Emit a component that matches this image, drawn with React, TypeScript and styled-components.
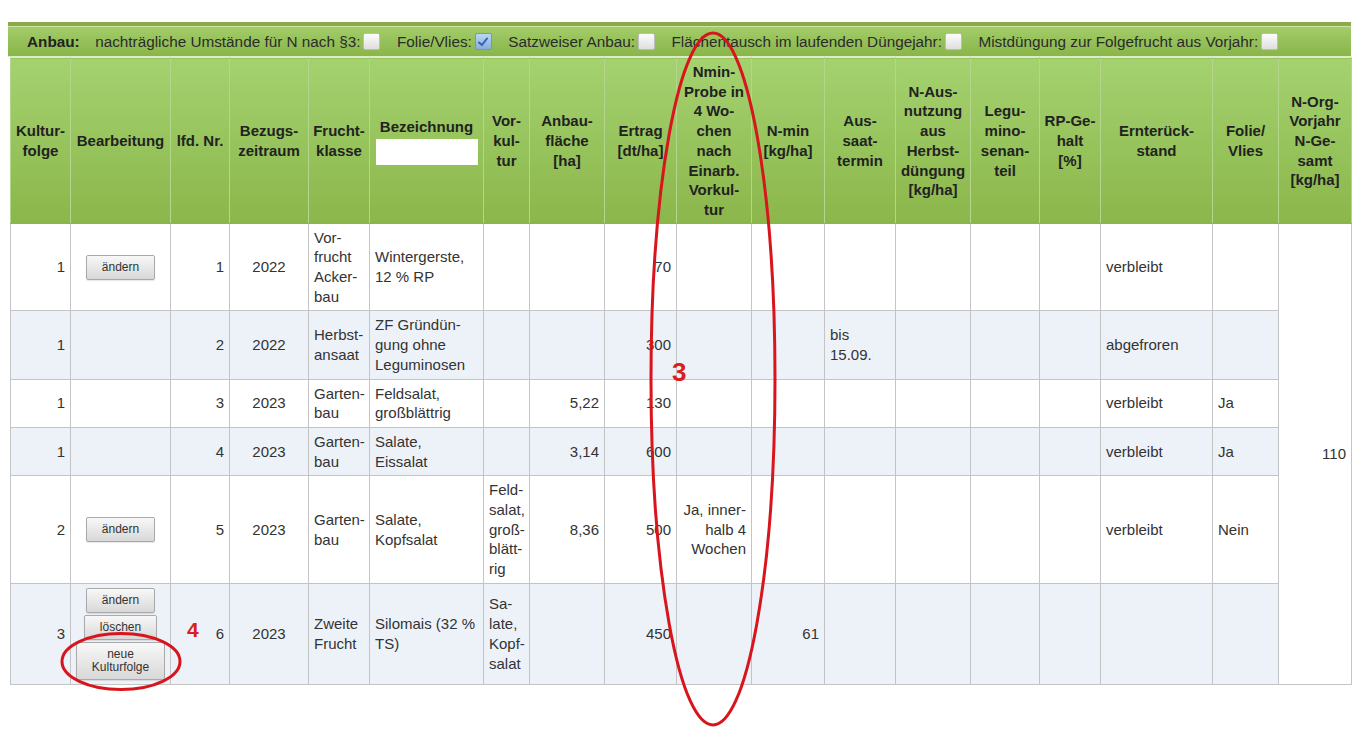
import React from "react";
import styled, { createGlobalStyle } from "styled-components";

type Align = "left" | "right" | "center";

const GlobalStyle = createGlobalStyle`
  html, body { margin: 0; padding: 0; background: #ffffff; }
  body { font-family: "Liberation Sans", Arial, sans-serif; color: #333; }
`;

const Page = styled.div`
  position: relative;
  width: 1358px;
  height: 745px;
  padding: 22px 0 0 8px;
  box-sizing: border-box;
  overflow: hidden;
`;

const OptionsBar = styled.div`
  width: 1343px;
  height: 35px;
  box-sizing: border-box;
  border-top: 4px solid #8ea94b;
  border-bottom: 1px solid #dbedc6;
  background: linear-gradient(#a2cd69, #8ab54a);
  box-shadow: inset 0 1px 0 #cde4a4;
  display: flex;
  align-items: center;
  padding: 1px 0 0 19px;
  gap: 16.5px;
  font-size: 15.3px;
  color: #2b2b2b;
`;

const BarTitle = styled.span`
  font-weight: bold;
  color: #222;
  margin-right: -1px;
`;

const Option = styled.label`
  display: inline-flex;
  align-items: center;
  gap: 3px;
`;

const Box = styled.span<{ $checked?: boolean }>`
  display: inline-flex;
  align-items: center;
  justify-content: center;
  width: 17px;
  height: 17px;
  box-sizing: border-box;
  border-radius: 2px;
  border: 1px solid ${(p) => (p.$checked ? "#7197c6" : "#bdbdbd")};
  background: ${(p) =>
    p.$checked
      ? "linear-gradient(#bcd6f3, #86aede)"
      : "linear-gradient(#fdfdfd, #dedede)"};
`;

const Grid = styled.table`
  margin-left: 2px;
  width: 1341px;
  table-layout: fixed;
  border-collapse: collapse;
  font-size: 15px;
  line-height: 19.7px;
`;

const HeadCell = styled.th`
  background: linear-gradient(#a4d26f, #8bb64b);
  border: 1px solid #b3d68c;
  border-top-color: #dcedc8;
  border-bottom-color: #8bb64b;
  padding: 4px 3px 3px;
  font-weight: bold;
  color: #222;
  text-align: center;
  vertical-align: middle;
`;

const FilterInput = styled.input`
  display: block;
  width: 102px;
  height: 26px;
  box-sizing: border-box;
  margin: 2px auto 0;
  border: none;
  background: #fff;
  padding: 0 4px;
  font-family: inherit;
  font-size: 14px;
`;

const BodyRow = styled.tr<{ $alt: boolean }>`
  background: ${(p) => (p.$alt ? "#edf2f9" : "#ffffff")};
`;

const Cell = styled.td<{ $align: Align }>`
  border: 1px solid #c4c4c4;
  padding: 4px 5px;
  text-align: ${(p) => p.$align};
  vertical-align: middle;
  color: #333;
`;

const TotalCell = styled(Cell)`
  background: #ffffff;
`;

const ButtonStack = styled.div`
  display: flex;
  flex-direction: column;
  align-items: center;
  gap: 2px;
`;

const ActionButton = styled.button`
  font-family: "Liberation Sans", Arial, sans-serif;
  font-size: 12px;
  line-height: 13px;
  color: #333;
  padding: 5px 15px;
  border: 1px solid #a9a9a9;
  border-radius: 2px;
  background: linear-gradient(#f8f8f8, #d8d8d8);
  box-shadow: 0 1px 1px rgba(0, 0, 0, 0.1);
  cursor: pointer;
`;

const Annotations = styled.svg`
  position: absolute;
  left: 0;
  top: 0;
  pointer-events: none;
`;

const Marker = styled.span<{ $size: number }>`
  position: absolute;
  font-family: "Liberation Sans", Arial, sans-serif;
  font-weight: bold;
  font-size: ${(p) => p.$size}px;
  line-height: 1;
  color: #d8201e;
  pointer-events: none;
`;

type Column = { w: number; head: string[]; align: Align; filter?: boolean };

const columns: Column[] = [
  { w: 60, head: ["Kultur-", "folge"], align: "right" },
  { w: 100, head: ["Bearbeitung"], align: "center" },
  { w: 59, head: ["lfd. Nr."], align: "right" },
  { w: 79, head: ["Bezugs-", "zeitraum"], align: "center" },
  { w: 61, head: ["Frucht-", "klasse"], align: "left" },
  { w: 114, head: ["Bezeichnung"], align: "left", filter: true },
  { w: 46, head: ["Vor-", "kul-", "tur"], align: "left" },
  { w: 75, head: ["Anbau-", "fläche", "[ha]"], align: "right" },
  { w: 72, head: ["Ertrag", "[dt/ha]"], align: "right" },
  {
    w: 75,
    head: ["Nmin-", "Probe in", "4 Wo-", "chen", "nach", "Einarb.", "Vorkul-", "tur"],
    align: "right",
  },
  { w: 73, head: ["N-min", "[kg/ha]"], align: "right" },
  { w: 71, head: ["Aus-", "saat-", "termin"], align: "left" },
  { w: 75, head: ["N-Aus-", "nutzung", "aus", "Herbst-", "düngung", "[kg/ha]"], align: "left" },
  { w: 69, head: ["Legu-", "mino-", "senan-", "teil"], align: "left" },
  { w: 61, head: ["RP-Ge-", "halt", "[%]"], align: "left" },
  { w: 112, head: ["Ernterück-", "stand"], align: "left" },
  { w: 66, head: ["Folie/", "Vlies"], align: "left" },
  { w: 73, head: ["N-Org-", "Vorjahr", "N-Ge-", "samt", "[kg/ha]"], align: "right" },
];

type Actions = "edit" | "all" | "none";
type Row = { actions: Actions; cells: string[] };

// cells: every column except Bearbeitung and the last (rowspan) column
const rows: Row[] = [
  {
    actions: "edit",
    cells: ["1", "1", "2022", "Vor-\nfrucht\nAcker-\nbau", "Wintergerste,\n12 % RP", "", "", "70", "", "", "", "", "", "", "verbleibt", ""],
  },
  {
    actions: "none",
    cells: ["1", "2", "2022", "Herbst-\nansaat", "ZF Gründün-\ngung ohne\nLeguminosen", "", "", "300", "", "", "bis\n15.09.", "", "", "", "abgefroren", ""],
  },
  {
    actions: "none",
    cells: ["1", "3", "2023", "Garten-\nbau", "Feldsalat,\ngroßblättrig", "", "5,22", "130", "", "", "", "", "", "", "verbleibt", "Ja"],
  },
  {
    actions: "none",
    cells: ["1", "4", "2023", "Garten-\nbau", "Salate,\nEissalat", "", "3,14", "600", "", "", "", "", "", "", "verbleibt", "Ja"],
  },
  {
    actions: "edit",
    cells: ["2", "5", "2023", "Garten-\nbau", "Salate,\nKopfsalat", "Feld-\nsalat,\ngroß-\nblätt-\nrig", "8,36", "500", "Ja, inner-\nhalb 4\nWochen", "", "", "", "", "", "verbleibt", "Nein"],
  },
  {
    actions: "all",
    cells: ["3", "6", "2023", "Zweite\nFrucht", "Silomais (32 %\nTS)", "Sa-\nlate,\nKopf-\nsalat", "", "450", "", "61", "", "", "", "", "", ""],
  },
];

const Lines = ({ text }: { text: string }) => (
  <>
    {text.split("\n").map((line, i, arr) => (
      <React.Fragment key={i}>
        {line}
        {i < arr.length - 1 && <br />}
      </React.Fragment>
    ))}
  </>
);

const ActionsCell = ({ kind }: { kind: Actions }) => (
  <Cell $align="center">
    {kind !== "none" && (
      <ButtonStack>
        <ActionButton type="button">ändern</ActionButton>
        {kind === "all" && (
          <>
            <ActionButton type="button">löschen</ActionButton>
            <ActionButton type="button">
              neue
              <br />
              Kulturfolge
            </ActionButton>
          </>
        )}
      </ButtonStack>
    )}
  </Cell>
);

const CheckMark = () => (
  <svg width="12" height="12" viewBox="0 0 12 12">
    <path d="M2 6.5 L5 9 L10 2.5" fill="none" stroke="#2f62ad" strokeWidth="2" strokeLinecap="round" strokeLinejoin="round" />
  </svg>
);

const options: { label: string; checked?: boolean }[] = [
  { label: "nachträgliche Umstände für N nach §3:" },
  { label: "Folie/Vlies:", checked: true },
  { label: "Satzweiser Anbau:" },
  { label: "Flächentausch im laufenden Düngejahr:" },
  { label: "Mistdüngung zur Folgefrucht aus Vorjahr:" },
];

export default function App() {
  return (
    <>
      <GlobalStyle />
      <Page>
        <OptionsBar>
          <BarTitle>Anbau:</BarTitle>
          {options.map((o) => (
            <Option key={o.label}>
              {o.label}
              <Box $checked={o.checked}>{o.checked && <CheckMark />}</Box>
            </Option>
          ))}
        </OptionsBar>
        <Grid>
          <colgroup>
            {columns.map((c, i) => (
              <col key={i} style={{ width: c.w }} />
            ))}
          </colgroup>
          <thead>
            <tr>
              {columns.map((c, i) => (
                <HeadCell key={i}>
                  <Lines text={c.head.join("\n")} />
                  {c.filter && <FilterInput type="text" aria-label="Bezeichnung filtern" />}
                </HeadCell>
              ))}
            </tr>
          </thead>
          <tbody>
            {rows.map((r, ri) => {
              const dataCols = columns.filter((_, ci) => ci !== 1 && ci !== columns.length - 1);
              return (
                <BodyRow key={ri} $alt={ri % 2 === 1}>
                  <Cell $align={dataCols[0].align}>
                    <Lines text={r.cells[0]} />
                  </Cell>
                  <ActionsCell kind={r.actions} />
                  {r.cells.slice(1).map((txt, ci) => (
                    <Cell key={ci} $align={dataCols[ci + 1].align}>
                      <Lines text={txt} />
                    </Cell>
                  ))}
                  {ri === 0 && (
                    <TotalCell rowSpan={rows.length} $align="right">
                      110
                    </TotalCell>
                  )}
                </BodyRow>
              );
            })}
          </tbody>
        </Grid>
        <Annotations width="1358" height="745" viewBox="0 0 1358 745">
          <ellipse cx="713" cy="379" rx="62" ry="346" fill="none" stroke="#d8141c" strokeWidth="3" />
          <ellipse cx="121" cy="661.5" rx="59" ry="28" fill="none" stroke="#d8141c" strokeWidth="3" />
        </Annotations>
        <Marker $size={26} style={{ left: 672, top: 359 }}>3</Marker>
        <Marker $size={21} style={{ left: 187, top: 619 }}>4</Marker>
      </Page>
    </>
  );
}
